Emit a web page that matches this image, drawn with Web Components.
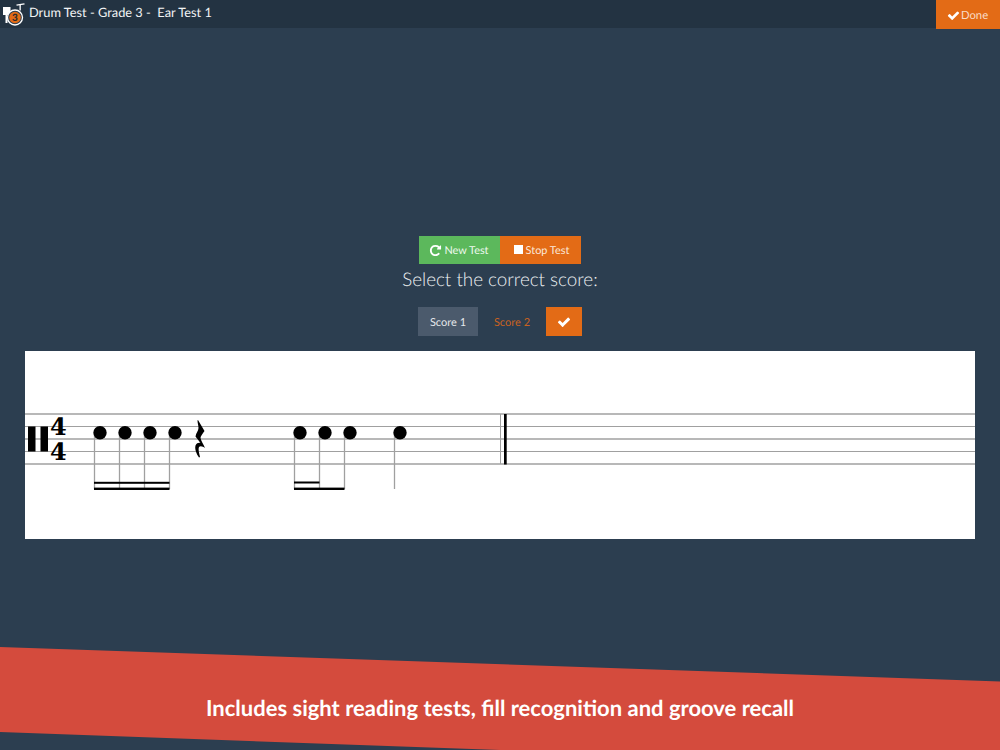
<!DOCTYPE html>
<html lang="en"><head><meta charset="utf-8"><title>Drum Test</title>
<style>
html,body{margin:0;padding:0;background:#2c3e50;font-family:Lato,"Open Sans",sans-serif;text-rendering:geometricPrecision}
</style></head>
<body>
<app-shell>
  <top-bar slot="top" heading="Drum Test - Grade 3 -&nbsp; Ear Test 1"></top-bar>
  <test-controls></test-controls>
  <score-tabs></score-tabs>
  <score-sheet></score-sheet>
  <promo-banner slot="banner">Includes sight reading tests, fill recognition and groove recall</promo-banner>
</app-shell>
<script>
const CHECK='<path d="M1671 566q0 40-28 68l-724 724-136 136q-28 28-68 28t-68-28l-136-136-362-362q-28-28-28-68t28-68l136-136q28-28 68-28t68 28l294 295 656-657q28-28 68-28t68 28l136 136q28 28 28 68z"/>';
const REPEAT='<path d="M1664 256v448q0 26-19 45t-45 19h-448q-42 0-59-40-17-39 14-69l138-138q-148-137-349-137-104 0-198.5 40.5t-163.5 109.5-109.5 163.5-40.5 198.5 40.5 198.5 109.5 163.5 163.5 109.5 198.5 40.5q119 0 225-52t179-147q7-10 23-12 15 0 25 9l137 138q9 8 9.5 20.5t-7.5 22.5q-109 132-264 204.5t-327 72.5q-156 0-298-61t-245-164-164-245-61-298 61-298 164-245 245-164 298-61q147 0 284.5 55.5t244.5 156.5l130-129q29-31 70-14 39 17 39 59z"/>';
function define(name,html){
  customElements.define(name,class extends HTMLElement{
    connectedCallback(){
      if(this.shadowRoot)return;
      const r=this.attachShadow({mode:'open'});
      r.innerHTML=typeof html==='function'?html(this):html;
    }
  });
}
define('app-shell',`<style>
:host{display:flex;flex-direction:column;width:1000px;height:750px;background:#2c3e50;overflow:hidden}
main{flex:1;display:flex;flex-direction:column;align-items:center;padding-top:208px;min-height:0}
</style><slot name="top"></slot><main><slot></slot></main><slot name="banner"></slot>`);
define('top-bar',h=>`<style>
:host{display:flex;align-items:flex-start;height:28px;background:#233342;color:#fff;flex:none}
.logo{flex:none;width:26px;height:26px;margin:0 1px 0 2px}
.t{font-size:12.800px;font-weight:400;line-height:24px;color:#f2f4f5;flex:1;white-space:pre}
.done{display:flex;align-items:center;justify-content:center;gap:1px;width:64px;height:29px;background:#e36b16;color:#f9dcc6;font-size:11.300px;font-weight:400;box-sizing:border-box;padding:1px 1px 0 0}
.done svg{width:13px;height:13px;fill:#fff}
</style>
<svg class="logo" viewBox="0 0 26 26"><rect x="1" y="7" width="7.500" height="8" fill="#fff"/><rect x="3.500" y="15" width="2" height="8" fill="#fff"/><path d="M14.500 5.200 L22.500 3.800" stroke="#fff" stroke-width="1.200"/><rect x="17.500" y="4.500" width="1.300" height="6" fill="#fff"/><circle cx="13" cy="17.500" r="7.500" fill="#2c3e50" stroke="#fff" stroke-width="1.300"/><circle cx="13" cy="17.500" r="5.800" fill="#e36b16"/><text x="13" y="21" text-anchor="middle" font-family="Lato" font-weight="900" font-size="10" fill="#2c2c2c">3</text></svg>
<span class="t">${h.getAttribute('heading')}</span>
<span class="done"><svg viewBox="0 0 1792 1792">${CHECK}</svg>Done</span>`);
define('test-controls',`<style>
:host{display:flex;flex-direction:column;align-items:center;color:#fff}
.g{display:flex;height:28px}
.b{width:81px;display:flex;align-items:center;justify-content:center;gap:2px;font-size:10.900px;font-weight:400;color:#eef8ee;box-sizing:border-box}
.n{background:#5cb85c;padding-right:1px}.s{background:#e36b16;gap:3px;color:#fbe8da;padding-left:2px}
svg{width:13px;height:13px;fill:#fff}
.sq{width:9px;height:9px;background:#fff;margin-top:-1px}
h2{margin:4px 0 0;font-size:18.800px;line-height:24px;font-weight:300;color:#eef1f3;white-space:nowrap}
</style>
<div class="g"><span class="b n"><svg viewBox="0 0 1792 1792">${REPEAT}</svg>New Test</span><span class="b s"><span class="sq"></span>Stop Test</span></div>
<h2>Select the correct score:</h2>`);
define('score-tabs',`<style>
:host{display:flex;gap:4px;margin-top:15px;height:29px;font-size:11px;font-weight:400}
span{display:flex;align-items:center;justify-content:center;width:60px;padding-top:1px}
.a{background:#4b5a6c;color:#e4e7ea}
.o{color:#c96220}
.c{width:36px;background:#e36b16}
svg{width:14px;height:14px;fill:#fff}
</style><span class="a">Score 1</span><span class="o">Score 2</span><span class="c"><svg viewBox="0 0 1792 1792">${CHECK}</svg></span>`);
define('score-sheet',`<style>
:host{display:block;width:950px;height:188px;margin-top:15px;background:#fff;flex:none}
svg{display:block}
.l{stroke:#a0a0a0;stroke-width:1}
.st{stroke:#a0a0a0;stroke-width:1.300}
text{font-family:"DejaVu Serif",serif;font-weight:700;font-size:24px;fill:#000}
</style>
<svg width="950" height="188" viewBox="25 351 950 188">
<g class="l">
<line x1="25" x2="975" y1="414" y2="414" stroke-width="1.400"/><line x1="25" x2="975" y1="426.500" y2="426.500"/><line x1="25" x2="975" y1="439" y2="439" stroke-width="1.400"/><line x1="25" x2="975" y1="451.500" y2="451.500"/><line x1="25" x2="975" y1="464" y2="464" stroke-width="1.400"/>
</g>
<rect x="28" y="426.500" width="7.500" height="25"/><rect x="40.500" y="426.500" width="7.500" height="25"/>
<text x="50" y="435">4</text><text x="50" y="460">4</text>
<g class="st">
<line x1="94.500" x2="94.500" y1="433" y2="489"/><line x1="119.500" x2="119.500" y1="433" y2="489"/><line x1="144.500" x2="144.500" y1="433" y2="489"/><line x1="169.500" x2="169.500" y1="433" y2="489"/>
<line x1="294.500" x2="294.500" y1="433" y2="489"/><line x1="319.500" x2="319.500" y1="433" y2="489"/><line x1="344.500" x2="344.500" y1="433" y2="489"/><line x1="394.500" x2="394.500" y1="433" y2="489"/>
</g>
<g fill="#000">
<circle cx="100" cy="432.700" r="6.700"/><circle cx="125" cy="432.700" r="6.700"/><circle cx="150" cy="432.700" r="6.700"/><circle cx="175" cy="432.700" r="6.700"/>
<circle cx="300" cy="432.700" r="6.700"/><circle cx="325" cy="432.700" r="6.700"/><circle cx="350" cy="432.700" r="6.700"/><circle cx="400" cy="432.700" r="6.700"/>
<rect x="94" y="481.800" width="75.500" height="2"/><rect x="94" y="487.600" width="75.500" height="2.400"/>
<rect x="294" y="481.500" width="25.500" height="2"/><rect x="294" y="487.600" width="50.500" height="2.400"/>
<path d="M198 420 L204.500 431 C202.500 434 200.500 436 200.500 438 C201 441 203.500 444 205 448 C203 446.500 200.500 445.500 199 447 C198 449 199 453 200 457 L199 457.500 C196.500 454 194.500 449 195.500 445.500 C196.500 443 199 442.500 200.500 443 L195.500 436.500 C196 433 198.500 431 198.500 428 C198.500 425.500 197.500 423 197.500 420.500Z"/>
<rect x="504" y="414" width="2.700" height="50.500"/>
</g>
<line x1="500.500" x2="500.500" y1="414" y2="464" stroke="#a0a0a0"/>
</svg>`);
define('promo-banner',`<style>
:host{display:flex;align-items:center;justify-content:center;flex:none;height:103px;margin-top:auto;background:#d44b3d;color:#fff;font-size:22px;font-weight:700;clip-path:polygon(0 0,100% 34.500px,100% 100%,500px 100%,0 85px);padding-top:18px;box-sizing:border-box;white-space:nowrap}
</style><slot></slot>`);
</script>
</body></html>
